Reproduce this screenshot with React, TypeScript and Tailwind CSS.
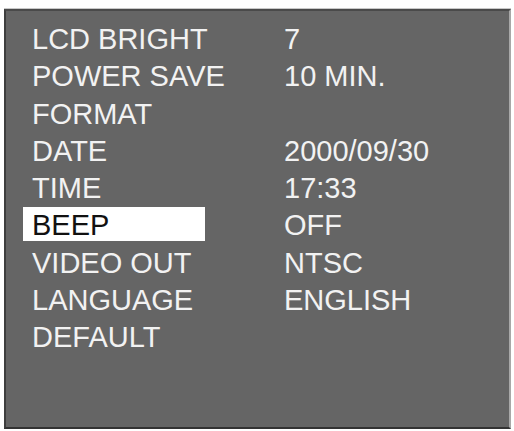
import React from "react";

const rows: [string, string][] = [
  ["LCD BRIGHT", "7"],
  ["POWER SAVE", "10 MIN."],
  ["FORMAT", ""],
  ["DATE", "2000/09/30"],
  ["TIME", "17:33"],
  ["BEEP", "OFF"],
  ["VIDEO OUT", "NTSC"],
  ["LANGUAGE", "ENGLISH"],
  ["DEFAULT", ""],
];

export default function App() {
  return (
    <div className="w-[514px] h-[431px] bg-white pt-[8px] pl-[4px] overflow-hidden">
      <div className="w-[507px] h-[421px] border-t border-t-[#c8c8c8]">
        <div
          className="w-full h-full bg-[#656565] border-t-2 border-l-2 border-b-2 border-r-2 border-t-[#4a4a4a] border-l-[#3e3e3e] border-b-[#333333] border-r-[#a8a8a8] pt-[10px] pl-[17px] text-[29px] leading-[37.25px] text-[#f2f2f2] whitespace-nowrap"
          style={{ fontFamily: '"Liberation Sans", Arial, sans-serif' }}
        >
          {rows.map(([label, value]) => {
            const sel = label === "BEEP";
            return (
              <div key={label} className="flex h-[37.25px]">
                <div
                  className={
                    sel
                      ? "w-[182px] shrink-0 h-[34px] bg-white text-[#111111] pl-[9px]"
                      : "w-[182px] shrink-0 pl-[9px]"
                  }
                >
                  {label}
                </div>
                <div className="pl-[79px]">{value}</div>
              </div>
            );
          })}
        </div>
      </div>
    </div>
  );
}
